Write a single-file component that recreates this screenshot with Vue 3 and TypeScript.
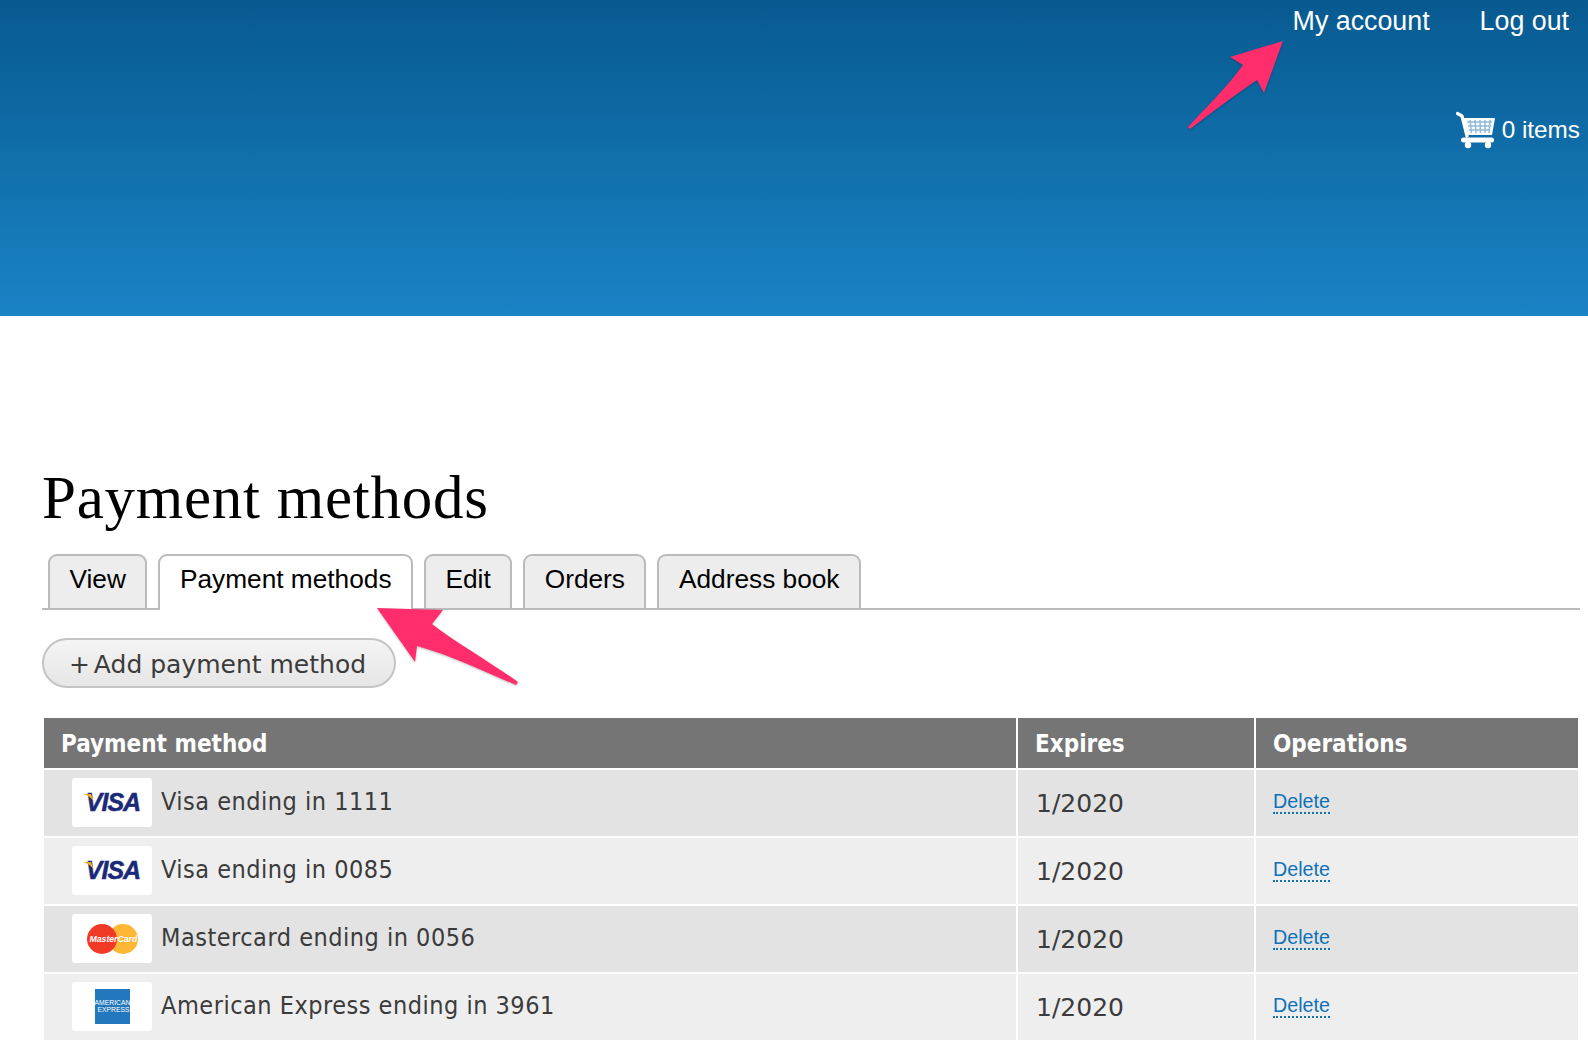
<script setup lang="ts">
interface Method {
  brand: 'visa' | 'mastercard' | 'amex'
  label: string
  expires: string
}

const tabs = ['View', 'Payment methods', 'Edit', 'Orders', 'Address book']

const methods: Method[] = [
  { brand: 'visa', label: 'Visa ending in 1111', expires: '1/2020' },
  { brand: 'visa', label: 'Visa ending in 0085', expires: '1/2020' },
  { brand: 'mastercard', label: 'Mastercard ending in 0056', expires: '1/2020' },
  { brand: 'amex', label: 'American Express ending in 3961', expires: '1/2020' }
]
</script>

<template>
  <div class="page">
    <header class="site-header">
      <nav class="user-nav">
        <a>My account</a>
        <a>Log out</a>
      </nav>
      <div class="cart">
        <svg class="cart__icon" width="40" height="38" viewBox="0 0 40 38">
          <path d="M1.500 2.500 L6 5 L11 25" fill="none" stroke="#fff" stroke-width="3.200" stroke-linecap="round" stroke-linejoin="round" />
          <path d="M7 7 H39 L36 24 H10 Z" fill="#fff" />
          <path d="M11 11 H36 M12 15 H35 M13 19 H34 M14 9 L15.500 22 M19 9 L20 22 M24 9 L24.500 22 M29 9 L29 22 M34 9 L33 22" stroke="#8fbbdc" stroke-width="1.500" fill="none" />
          <rect x="5" y="26.500" width="33" height="5" rx="2.500" fill="#fff" />
          <circle cx="12" cy="34" r="3.200" fill="#fff" />
          <circle cx="32" cy="34" r="3.200" fill="#fff" />
        </svg>
        <span>0 items</span>
      </div>
    </header>

    <main class="content">
      <h1 class="title">Payment methods</h1>

      <ul class="tabs">
        <li v-for="tab in tabs" :key="tab" class="tab" :class="{ 'tab--active': tab === 'Payment methods' }">
          {{ tab }}
        </li>
      </ul>

      <a class="add-btn">+<span class="add-btn__gap"></span>Add payment method</a>

      <table class="methods">
        <colgroup>
          <col class="col-method" />
          <col class="col-expires" />
          <col />
        </colgroup>
        <thead>
          <tr>
            <th>Payment method</th>
            <th>Expires</th>
            <th>Operations</th>
          </tr>
        </thead>
        <tbody>
          <tr v-for="m in methods" :key="m.label">
            <td>
              <div class="method">
                <span class="card">
                  <template v-if="m.brand === 'visa'">
                    <span class="visa">
                      <svg class="visa__flick" width="12" height="8" viewBox="0 0 12 8">
                        <path d="M0 0 H8 L11 8 C8.500 4 5 1.500 0 0 Z" fill="#f2a81d" />
                      </svg>
                      VISA
                    </span>
                  </template>
                  <template v-else-if="m.brand === 'mastercard'">
                    <span class="mc">
                      <span class="mc__red"></span>
                      <span class="mc__yellow"></span>
                      <span class="mc__text">MasterCard</span>
                    </span>
                  </template>
                  <template v-else>
                    <span class="amex">
                      <span class="amex__line">AMERICAN</span>
                      <span class="amex__line amex__line--second">EXPRESS</span>
                    </span>
                  </template>
                </span>
                <span class="method__label">{{ m.label }}</span>
              </div>
            </td>
            <td class="expires">{{ m.expires }}</td>
            <td class="operations"><a class="delete">Delete</a></td>
          </tr>
        </tbody>
      </table>
    </main>

    <!-- annotation arrows on top of the screenshot -->
    <svg class="arrows" width="1588" height="1052" viewBox="0 0 1588 1052">
      <path d="M1283 41 L1230 57 L1243 65 C1225 90 1205 108 1188 127 L1190 129 C1212 112 1235 95 1257 80 L1264 93 Z" />
      <path d="M377 608 L443 610 L432 624 C455 642 490 662 518 682 L516 685 C485 672 450 655 417 646 L415 662 Z" />
    </svg>
  </div>
</template>

<style>
html,
body {
  margin: 0;
  background: #fff;
}
</style>

<style scoped>
.page {
  position: relative;
  height: 1052px;
  overflow: hidden;
  font-family: "Liberation Sans", Arial, sans-serif;
}

.site-header {
  height: 316px;
  box-sizing: border-box;
  padding: 5px 8px 0 0;
  display: flex;
  flex-direction: column;
  align-items: flex-end;
  background: linear-gradient(#075a90, #1a83c5);
  color: #fff;
}

.user-nav {
  display: flex;
  gap: 50px;
  padding-right: 11px;
  font-size: 26.800px;
  line-height: 32px;
}

.cart {
  display: flex;
  align-items: center;
  gap: 6px;
  margin-top: 74px;
  font-size: 24.300px;
}

.cart__icon {
  display: block;
  filter: blur(0.4px);
}

.content {
  padding: 0 8px 0 42px;
}

.title {
  margin: 147px 0 0;
  font-family: "Liberation Serif", Georgia, serif;
  font-weight: 400;
  font-size: 61px;
  line-height: 70px;
  letter-spacing: 0.75px;
  color: #000;
}

.tabs {
  display: flex;
  gap: 11px;
  margin: 21px 0 0;
  padding: 0 0 0 6px;
  list-style: none;
  border-bottom: 2px solid #bbb;
  height: 54px;
}

.tab {
  height: 54px;
  box-sizing: border-box;
  padding: 8px 19.500px 0;
  border: 2px solid #bbb;
  border-bottom: 0;
  border-radius: 9px 9px 0 0;
  background: #ededed;
  font-size: 26.250px;
  line-height: 30px;
  color: #000;
}

.tab--active {
  height: 56px;
  background: #fff;
}

.add-btn {
  display: flex;
  align-items: center;
  justify-content: center;
  width: 354px;
  height: 50px;
  box-sizing: border-box;
  margin-top: 28px;
  padding: 2px 3px 0 0;
  border: 2px solid #c4c4c4;
  border-radius: 25px;
  background: linear-gradient(#f4f4f4, #e6e6e6);
  font-family: "DejaVu Sans", Verdana, sans-serif;
  font-size: 25px;
  color: #3b3b3b;
}

.add-btn__gap {
  width: 4px;
}

.methods {
  width: 1534px;
  margin: 30px 0 0 2px;
  border-collapse: separate;
  border-spacing: 0;
  table-layout: fixed;
  font-family: "DejaVu Sans", Verdana, sans-serif;
  font-size: 25px;
  color: #3b3b3b;
}

.col-method {
  width: 974px;
}

.col-expires {
  width: 238px;
}

.methods th {
  height: 50px;
  padding: 2px 0 0 17px;
  background: #757575;
  color: #fff;
  font-size: 24px;
  font-stretch: condensed;
  font-weight: 700;
  text-align: left;
  border-right: 2px solid #fff;
  box-sizing: border-box;
}

.methods th:last-child,
.methods td:last-child {
  border-right: 0;
}

.methods td {
  height: 68px;
  padding: 0 0 0 18px;
  box-sizing: border-box;
  border-top: 2px solid #fff;
  border-right: 2px solid #fff;
  background: #eee;
}

.methods tbody tr:nth-child(odd) td {
  background: #e3e3e3;
}

.method {
  display: flex;
  align-items: center;
  gap: 9px;
  margin-left: 10px;
}

.method__label {
  padding-bottom: 4px;
  font-stretch: condensed;
  letter-spacing: 0.5px;
}

.methods td.operations {
  padding: 0 0 8px 17px;
}

.card {
  display: flex;
  align-items: center;
  justify-content: center;
  width: 80px;
  height: 49px;
  margin-top: -1px;
  border-radius: 3px;
  background: #fff;
  flex: none;
}

.visa {
  position: relative;
  left: 1px;
  font-family: "Liberation Sans", Arial, sans-serif;
  font-size: 25px;
  font-weight: 700;
  font-style: italic;
  letter-spacing: -1px;
  color: #1a2a78;
  -webkit-text-stroke: 0.5px #1a2a78;
}

.visa__flick {
  position: absolute;
  left: -3px;
  top: 6px;
}

.mc {
  position: relative;
  display: block;
  width: 51px;
  height: 30px;
}

.mc__red,
.mc__yellow {
  position: absolute;
  top: 0;
  width: 30px;
  height: 30px;
  border-radius: 50%;
}

.mc__red {
  left: 0;
  background: #f13a26;
  z-index: 1;
}

.mc__yellow {
  right: 0;
  background: #fdb735;
}

.mc__text {
  position: absolute;
  z-index: 2;
  left: 3px;
  top: 8px;
  font-family: "Liberation Sans", Arial, sans-serif;
  font-size: 8.700px;
  line-height: 14px;
  font-weight: 700;
  font-style: italic;
  color: #fff;
}

.amex {
  display: flex;
  flex-direction: column;
  justify-content: center;
  gap: 1px;
  width: 35px;
  height: 35px;
  background: #2277bd;
  overflow: hidden;
}

.amex__line {
  font-family: "Liberation Sans", Arial, sans-serif;
  font-size: 6.800px;
  line-height: 6.500px;
  color: #fff;
  white-space: nowrap;
}

.amex__line--second {
  align-self: flex-end;
}

.delete {
  display: inline-block;
  font-family: "Liberation Sans", Arial, sans-serif;
  font-size: 19.700px;
  line-height: 21px;
  color: #0f71b8;
  border-bottom: 2px dotted #0f71b8;
}

.arrows {
  position: absolute;
  inset: 0;
  pointer-events: none;
  fill: #ff2d6b;
  filter: drop-shadow(0 1px 1px rgba(0, 0, 0, 0.25));
}
</style>
